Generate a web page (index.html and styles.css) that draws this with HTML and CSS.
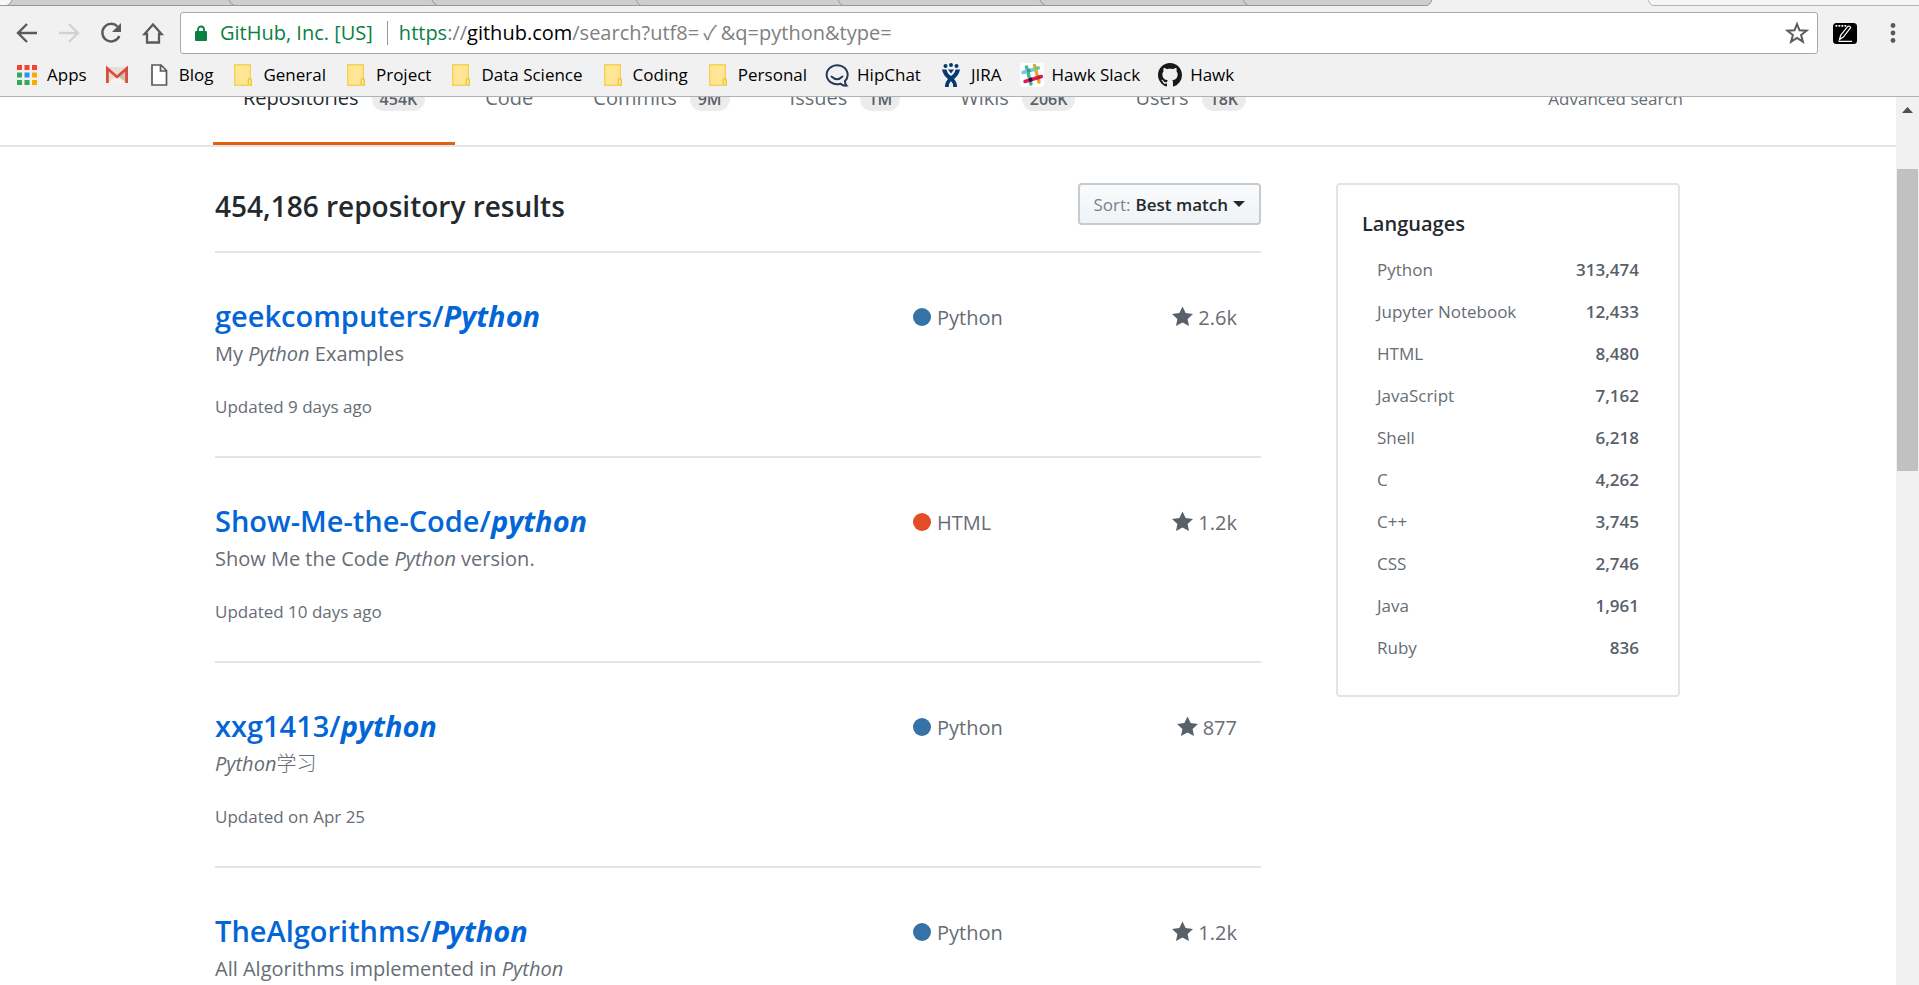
FILE: index.html
```html
<!DOCTYPE html>
<html lang="en">
<head>
<meta charset="utf-8">
<title>Search · python · GitHub</title>
<link rel="stylesheet" href="styles.css">
</head>
<body>
<svg class="defs" aria-hidden="true">
  <symbol id="folder" viewBox="0 0 24 24"><path d="M3.700 1.700h15.600v16.300h1v4.300H3.700z" fill="#ffe694" stroke="#f5d257" stroke-width="1.400"/><path d="M17.300 22v-5.200q0-1.300 1.500-1.300t1.500 1.300v4.200q0 1.200-1.500 1.200" fill="#ffe694" stroke="#edc53c" stroke-width="1.300"/></symbol>
  <symbol id="star" viewBox="0 0 14 16"><path fill="currentColor" d="M14 6l-4.900-.64L7 1 4.900 5.360 0 6l3.600 3.260L2.670 14 7 11.670 11.330 14l-.93-4.740z"/></symbol>
</svg>

<header class="chrome">
  <svg class="tabstrip" viewBox="0 0 1919 6" preserveAspectRatio="none" aria-hidden="true">
    <path d="M0 0H12L8 5H0z" fill="#f7f7f7"/>
    <path d="M12 0Q10 5 7 5.500H1427Q1430 5 1432 0z" fill="#cecece"/>
    <path d="M0 5.500H1427Q1430 5 1432 0M12 0Q10 5 7 5.500M229 0Q231 4.500 234 5.500M432 0Q434 4.500 437 5.500M636 0Q638 4.500 641 5.500M838 0Q840 4.500 843 5.500M1040 0Q1042 4.500 1045 5.500M1243 0Q1245 4.500 1248 5.500" fill="none" stroke="#999"/>
    <path d="M1648 0Q1650 5 1653 5.500H1919V0z" fill="#f6f6f6"/>
    <path d="M1648 0Q1650 5 1653 5.500H1919" fill="none" stroke="#b5b5b5"/>
  </svg>

  <div class="toolbar">
    <div class="nav-buttons">
      <button class="icon-button" aria-label="Back"><svg viewBox="0 0 24 24"><path d="M22 12H4M12 3l-9 9 9 9" fill="none" stroke="#5a5a5a" stroke-width="2.400"/></svg></button>
      <button class="icon-button" aria-label="Forward" disabled><svg viewBox="0 0 24 24"><path d="M2 12h18M12 3l9 9-9 9" fill="none" stroke="#d2d2d2" stroke-width="2.400"/></svg></button>
      <button class="icon-button" aria-label="Reload"><svg viewBox="0 0 24 24"><path d="M18.500 5.500A8.800 8.800 0 1 0 20.300 15" fill="none" stroke="#5a5a5a" stroke-width="2.400"/><path d="M22 2v9h-9z" fill="#5a5a5a"/></svg></button>
      <button class="icon-button" aria-label="Home"><svg viewBox="0 0 24 24"><path d="M12 3.500L3.500 13H6v8.500h12V13h2.500z" fill="none" stroke="#5a5a5a" stroke-width="2.300"/></svg></button>
    </div>
    <div class="address">
      <svg class="lock" viewBox="0 0 12 16" aria-hidden="true"><rect y="6" width="12" height="10" rx="1" fill="#0b8043"/><path d="M3 7V4.500a3 3 0 0 1 6 0V7" fill="none" stroke="#0b8043" stroke-width="1.800"/></svg>
      <span class="identity">GitHub, Inc. [US]</span>
      <div class="url" role="textbox" aria-label="Address"><span class="secure">https</span>://<span class="host">github.com</span>/search?utf8=<span class="check">✓</span>&amp;q=python&amp;type=</div>
      <button class="icon-button" aria-label="Bookmark this page"><svg viewBox="0 0 24 24"><path d="M12 3l2.500 6.300 7 .4-5.400 4.300 1.800 6.700-5.900-3.700-5.900 3.700 1.800-6.700-5.400-4.300 7-.4z" fill="none" stroke="#5a5a5a" stroke-width="2"/></svg></button>
    </div>
    <button class="icon-button" aria-label="Notes extension"><svg viewBox="0 0 24 24"><rect y="2" width="24" height="21" rx="3.500" fill="#000"/><path d="M2.500 4.800h11" stroke="#fff" stroke-width="1.800" stroke-dasharray="1.800 1.200"/><path d="M6.500 18.500l1.300-4.500 7.200-8.800q2-.7 2.700 1.500L10.300 16zM5.500 20.300H19" fill="none" stroke="#fff" stroke-width="1.200"/></svg></button>
    <button class="icon-button menu" aria-label="Menu"><svg viewBox="0 0 24 24" fill="#5a5a5a"><circle cx="12" cy="4.500" r="2.400"/><circle cx="12" cy="12" r="2.400"/><circle cx="12" cy="19.500" r="2.400"/></svg></button>
  </div>

  <nav class="bookmarks" aria-label="Bookmarks">
    <a href="#"><svg viewBox="0 0 24 24"><path fill="#f44336" d="M2 2h5v5H2zM9.500 2h5v5h-5zM17 2h5v5h-5z"/><path fill="#34a853" d="M2 9.500h5v5H2zM2 17h5v5H2zM9.500 17h5v5h-5z"/><path fill="#2196f3" d="M9.500 9.500h5v5h-5z"/><path fill="#f9ab00" d="M17 9.500h5v5h-5zM17 17h5v5h-5z"/></svg>Apps</a>
    <a href="#" aria-label="Gmail"><svg viewBox="0 0 24 24"><path fill="#e6dfd3" d="M1 4h22v16H1z"/><path fill="#c9c0b2" d="M12 13l11 7V6z"/><path fill="#f7f4ee" d="M3 20l9-7 9 7z"/><path d="M2.400 20V5.500L12 14l9.600-8.500V20" fill="none" stroke="#dd4b3e" stroke-width="2.800"/></svg></a>
    <a href="#"><svg viewBox="0 0 24 24"><path d="M5 2h9l5.500 5.500V22H5zM13.500 2v6h6" fill="#fff" stroke="#5a5a5a" stroke-width="1.700"/></svg>Blog</a>
    <a href="#"><svg><use href="#folder"/></svg>General</a>
    <a href="#"><svg><use href="#folder"/></svg>Project</a>
    <a href="#"><svg><use href="#folder"/></svg>Data Science</a>
    <a href="#"><svg><use href="#folder"/></svg>Coding</a>
    <a href="#"><svg><use href="#folder"/></svg>Personal</a>
    <a href="#"><svg viewBox="0 0 24 24"><path d="M20 18A10.500 9.500 0 1 0 15.500 20.700q2.500 2.200 6 1.900-1.600-1.600-1.500-4.600z" fill="none" stroke="#253858" stroke-width="2"/><path d="M6.500 13.500q5.500 5.500 11 0" fill="none" stroke="#253858" stroke-width="1.800" stroke-linecap="round"/></svg>HipChat</a>
    <a href="#"><svg viewBox="0 0 24 24" fill="#053a70"><circle cx="6.500" cy="3" r="2"/><circle cx="12" cy="2" r="2"/><circle cx="17.500" cy="3" r="2"/><path d="M3 6.500h4.500Q8.500 11 12 13q3.500-2 4.500-6.500H21Q20 12 15 16q3 3 3 8h-3.800q0-4-2.200-6-2.200 2-2.200 6H6q0-5 3-8-5-4-6-9.500z"/><path d="M9 6.500h6L12 10.500z"/></svg>JIRA</a>
    <a href="#"><svg viewBox="0 0 24 24"><rect width="24" height="24" rx="3" fill="#fff"/><g fill="none" stroke-width="3.400" stroke-linecap="round"><path d="M6.500 4L11 21" stroke="#3eb991"/><path d="M14.500 2.500L19 19" stroke="#e9a820"/><path d="M3 9.500L18.500 5" stroke="#6ecadc"/><path d="M5 18.500L21.500 13.500" stroke="#e01765"/></g><path d="M6.600 6.600l3.300-1 .9 3.300-3.300 1z" fill="#39989c"/><path d="M15 4.200l3.300-1 .5 3-3 1z" fill="#a2b650"/><path d="M8.500 15.600l3.300-1 .9 3.300-3.300 1z" fill="#361238"/><path d="M16.500 13.200l3.300-1 .9 3.300-3.300 1z" fill="#cc2027"/></svg>Hawk Slack</a>
    <a href="#"><svg viewBox="0 0 16 16"><path fill="#1b1817" d="M8 0C3.580 0 0 3.580 0 8c0 3.540 2.290 6.530 5.470 7.590.4.070.55-.17.55-.38 0-.19-.01-.82-.01-1.490-2.010.37-2.530-.49-2.690-.94-.09-.23-.48-.94-.82-1.130-.28-.15-.68-.52-.01-.53.63-.01 1.080.58 1.230.82.72 1.210 1.870.87 2.330.66.070-.52.28-.87.51-1.070-1.780-.2-3.640-.89-3.640-3.950 0-.87.31-1.590.82-2.150-.08-.2-.36-1.020.08-2.120 0 0 .67-.21 2.200.82.64-.18 1.320-.27 2-.27s1.360.09 2 .27c1.530-1.040 2.200-.82 2.200-.82.44 1.100.16 1.920.08 2.120.51.56.82 1.270.82 2.150 0 3.070-1.870 3.750-3.650 3.950.29.25.54.73.54 1.480 0 1.070-.01 1.930-.01 2.200 0 .21.15.46.55.38A8.010 8.010 0 0 0 16 8c0-4.420-3.580-8-8-8z"/></svg>Hawk</a>
  </nav>
</header>

<div class="viewport">
  <div class="page">
    <nav class="search-nav" aria-label="Search types">
      <div class="container search-nav-row">
        <a class="tab selected" href="#">Repositories <span class="counter">454K</span></a>
        <a class="tab" href="#">Code</a>
        <a class="tab" href="#">Commits <span class="counter">9M</span></a>
        <a class="tab" href="#">Issues <span class="counter">1M</span></a>
        <a class="tab" href="#">Wikis <span class="counter">206K</span></a>
        <a class="tab" href="#">Users <span class="counter">18K</span></a>
        <a class="advanced" href="#">Advanced search</a>
      </div>
    </nav>

    <div class="container columns">
      <main>
        <div class="results-head">
          <h1>454,186 repository results</h1>
          <button class="sort"><span class="sort-label">Sort:</span> Best match<span class="caret"></span></button>
        </div>
        <ul class="results">
          <li class="result">
            <div>
              <h2><a href="#">geekcomputers/<em>Python</em></a></h2>
              <p class="description">My <em>Python</em> Examples</p>
              <p class="updated">Updated 9 days ago</p>
            </div>
            <div class="language"><span class="dot python"></span>Python</div>
            <a class="stars" href="#"><svg><use href="#star"/></svg>2.6k</a>
          </li>
          <li class="result">
            <div>
              <h2><a href="#">Show-Me-the-Code/<em>python</em></a></h2>
              <p class="description">Show Me the Code <em>Python</em> version.</p>
              <p class="updated">Updated 10 days ago</p>
            </div>
            <div class="language"><span class="dot html"></span>HTML</div>
            <a class="stars" href="#"><svg><use href="#star"/></svg>1.2k</a>
          </li>
          <li class="result">
            <div>
              <h2><a href="#">xxg1413/<em>python</em></a></h2>
              <p class="description"><em>Python</em><span class="cjk" lang="zh">学习</span></p>
              <p class="updated">Updated on Apr 25</p>
            </div>
            <div class="language"><span class="dot python"></span>Python</div>
            <a class="stars" href="#"><svg><use href="#star"/></svg>877</a>
          </li>
          <li class="result">
            <div>
              <h2><a href="#">TheAlgorithms/<em>Python</em></a></h2>
              <p class="description">All Algorithms implemented in <em>Python</em></p>
            </div>
            <div class="language"><span class="dot python"></span>Python</div>
            <a class="stars" href="#"><svg><use href="#star"/></svg>1.2k</a>
          </li>
        </ul>
      </main>

      <aside class="languages">
        <h2>Languages</h2>
        <ul>
          <li><a href="#">Python<span>313,474</span></a></li>
          <li><a href="#">Jupyter Notebook<span>12,433</span></a></li>
          <li><a href="#">HTML<span>8,480</span></a></li>
          <li><a href="#">JavaScript<span>7,162</span></a></li>
          <li><a href="#">Shell<span>6,218</span></a></li>
          <li><a href="#">C<span>4,262</span></a></li>
          <li><a href="#">C++<span>3,745</span></a></li>
          <li><a href="#">CSS<span>2,746</span></a></li>
          <li><a href="#">Java<span>1,961</span></a></li>
          <li><a href="#">Ruby<span>836</span></a></li>
        </ul>
      </aside>
    </div>
  </div>
  <div class="scrollbar" aria-hidden="true">
    <svg viewBox="0 0 23 23"><path d="M6 16h11l-5.500-6z" fill="#505050"/></svg>
    <div class="thumb"></div>
  </div>
</div>
</body>
</html>
```
FILE: styles.css
```css
* { box-sizing: border-box; }

body {
  margin: 0;
  height: 100vh;
  display: flex;
  flex-direction: column;
  overflow: hidden;
  background: #fff;
  color: #24292e;
  font-family: "Open Sans", "Noto Sans CJK SC", sans-serif;
  font-weight: 400;
  font-size: 20px;
}

h1, h2, p, ul { margin: 0; padding: 0; }
ul { list-style: none; }
a { color: inherit; text-decoration: none; }
button { font: inherit; color: inherit; cursor: pointer; }
.defs { display: none; }

/* Browser chrome */
.chrome {
  flex: none;
  background: #f1f1f1;
  border-bottom: 1px solid #b1b1b1;
}
.tabstrip { display: block; width: 100%; height: 6px; }

.toolbar {
  display: flex;
  align-items: center;
  gap: 15px;
  padding: 6px 14px 0 15px;
}
.nav-buttons { display: flex; gap: 18px; }
.icon-button {
  flex: none;
  width: 24px;
  height: 24px;
  padding: 0;
  border: 0;
  background: none;
}
.icon-button svg { display: block; width: 24px; height: 24px; }
.menu { margin-left: 9px; }

.address {
  flex: 1;
  display: flex;
  align-items: center;
  height: 42px;
  padding: 0 8px 0 14px;
  background: #fff;
  border: 1px solid #a9a9a9;
  border-radius: 3px;
}
.lock { width: 12px; height: 16px; margin-right: 13px; }
.identity {
  color: #0b8043;
  padding-right: 14px;
  line-height: 24px;
  border-right: 1px solid #999;
  margin-right: 11px;
}
.url { flex: 1; color: #808080; line-height: 24px; white-space: nowrap; }
.secure { color: #0b8043; }
.host { color: #000; }
.check {
  margin: 0 4px;
  font-family: "Noto Sans CJK SC", "DejaVu Sans", sans-serif;
  font-weight: 400;
  line-height: 1;
}

.bookmarks {
  display: flex;
  gap: 18px;
  padding: 7px 15px;
  color: #000;
  font-size: 17px;
  line-height: 28px;
}
.bookmarks a { display: flex; align-items: center; gap: 8px; white-space: nowrap; }
.bookmarks svg { width: 24px; height: 24px; }

/* Visible part of the scrolled page */
.viewport { flex: 1; min-height: 0; display: flex; overflow: hidden; }
.page { flex: 1; min-width: 0; margin-top: -44px; }
.container { max-width: 1470px; margin: 0 auto; }

.search-nav { border-bottom: 2px solid #e1e4e8; color: #666d75; }
.search-nav-row { display: flex; }
.tab {
  display: flex;
  align-items: baseline;
  gap: 13px;
  padding: 30px 30px 29px;
  line-height: 30px;
  border-bottom: 3px solid transparent;
}
.selected { color: #24292e; border-bottom-color: #e36209; }
.counter {
  padding: 0 8px;
  font-size: 16px;
  font-weight: 600;
  line-height: 24px;
  color: #586069;
  background: #ececec;
  border-radius: 12px;
}
.advanced {
  margin-left: auto;
  padding-top: 30px;
  font-size: 17px;
  line-height: 32px;
}

.columns {
  display: grid;
  grid-template-columns: minmax(0, 1046fr) minmax(0, 344fr);
  gap: 75px;
  align-items: start;
  padding: 36px 3px 0 2px;
}

.results-head {
  display: flex;
  justify-content: space-between;
  align-items: flex-start;
  padding-bottom: 21px;
  border-bottom: 2px solid #e1e4e8;
}
h1 { font-size: 28px; font-weight: 600; line-height: 47px; }
.sort {
  display: flex;
  align-items: center;
  gap: 5px;
  height: 42px;
  padding: 0 14px;
  font-size: 17px;
  font-weight: 600;
  background: linear-gradient(#fafbfc, #eff3f6);
  border: 2px solid #c6cbcf;
  border-radius: 4px;
}
.sort-label { color: #7c8085; font-weight: 400; }
.caret {
  border: 6px solid transparent;
  border-top-color: currentColor;
  border-bottom: 0;
}

.result {
  display: grid;
  grid-template-columns: minmax(0, 698fr) minmax(0, 174fr) minmax(0, 174fr);
  padding: 40px 0 36px;
  color: #666d75;
  border-bottom: 2px solid #e1e4e8;
}
.result h2 { font-size: 29px; font-weight: 600; line-height: 45px; color: #0366d6; }
.result h2 em { font-weight: 700; }
.description { line-height: 32px; }
.cjk { font-weight: 300; }
.updated { margin-top: 23px; font-size: 17px; line-height: 27px; }
.language, .stars { display: flex; align-items: center; height: 48px; }
.dot { width: 18px; height: 18px; margin-right: 6px; border-radius: 50%; }
.python { background: #3572a5; }
.html { background: #e34c26; }
.stars { justify-content: flex-end; gap: 5px; padding-right: 24px; }
.stars svg { width: 21px; height: 24px; color: #586069; }

.languages {
  padding: 24px 24px 26px;
  border: 2px solid #e1e4e8;
  border-radius: 4px;
}
.languages h2 { font-size: 20px; font-weight: 600; line-height: 30px; }
.languages ul { margin-top: 10px; }
.languages a {
  display: flex;
  justify-content: space-between;
  padding: 0 15px;
  font-size: 17px;
  line-height: 42px;
  color: #666d75;
}
.languages span { font-weight: 600; color: #586069; }

.scrollbar { flex: none; width: 23px; background: #f1f1f1; }
.scrollbar svg { display: block; width: 23px; height: 23px; }
.thumb { height: 34%; margin: 49px 1px 0; background: #c1c1c1; }
```
